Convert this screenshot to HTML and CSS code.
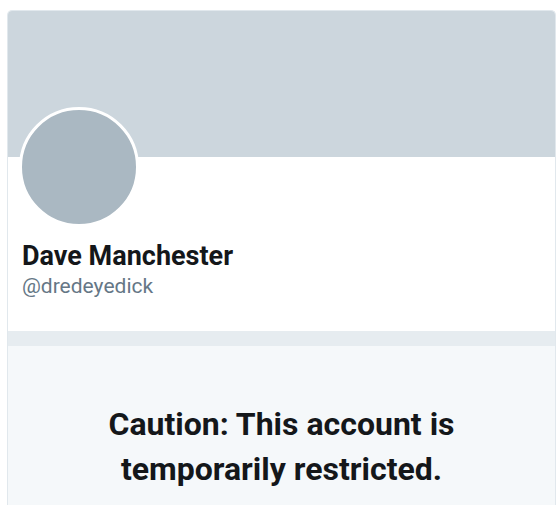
FILE: index.html
```html
<!DOCTYPE html>
<html lang="en">
<head>
  <meta charset="UTF-8">
  <title>Dave Manchester (@dredeyedick)</title>
  <link rel="stylesheet" href="styles.css">
</head>
<body>
  <div class="card">
    <div class="banner"></div>

    <div class="profile">
      <div class="avatar"></div>
      <h1 class="name">Dave Manchester</h1>
      <p class="handle">@dredeyedick</p>
    </div>

    <div class="divider"></div>

    <div class="notice">
      <h2>Caution: This account is temporarily restricted.</h2>
    </div>
  </div>
</body>
</html>
```

FILE: styles.css
```css
body {
  font-family: Roboto, "Liberation Sans", sans-serif;
  background: #ffffff;
  margin: 0;
  padding: 10px 4px 0 7px;
  overflow: hidden;
}
.card {
  border: 1px solid #e1e8ed;
  border-bottom: none;
  border-radius: 5px 5px 0 0;
  overflow: hidden;
  background: #ffffff;
}
.banner {
  height: 146px;
  background: #ccd6dd;
}
.profile {
  padding: 0 14px 32px 14px;
}
.avatar {
  width: 114px;
  height: 114px;
  margin: -50px 0 0 -3px;
  border: 3px solid #ffffff;
  border-radius: 50%;
  background: #aab8c2;
}
.name {
  margin: 13px 0 0 0;
  font-size: 27px;
  line-height: 32px;
  font-weight: 700;
  color: #14171a;
}
.handle {
  margin: 1px 0 0 0;
  font-size: 21px;
  line-height: 26px;
  color: #657786;
}
.divider {
  height: 15px;
  background: #e6ecf0;
}
.notice {
  background: #f5f8fa;
  padding: 56px 70px 20px;
  text-align: center;
}
.notice h2 {
  margin: 0;
  font-size: 32px;
  line-height: 45px;
  font-weight: 700;
  color: #14171a;
}
```
